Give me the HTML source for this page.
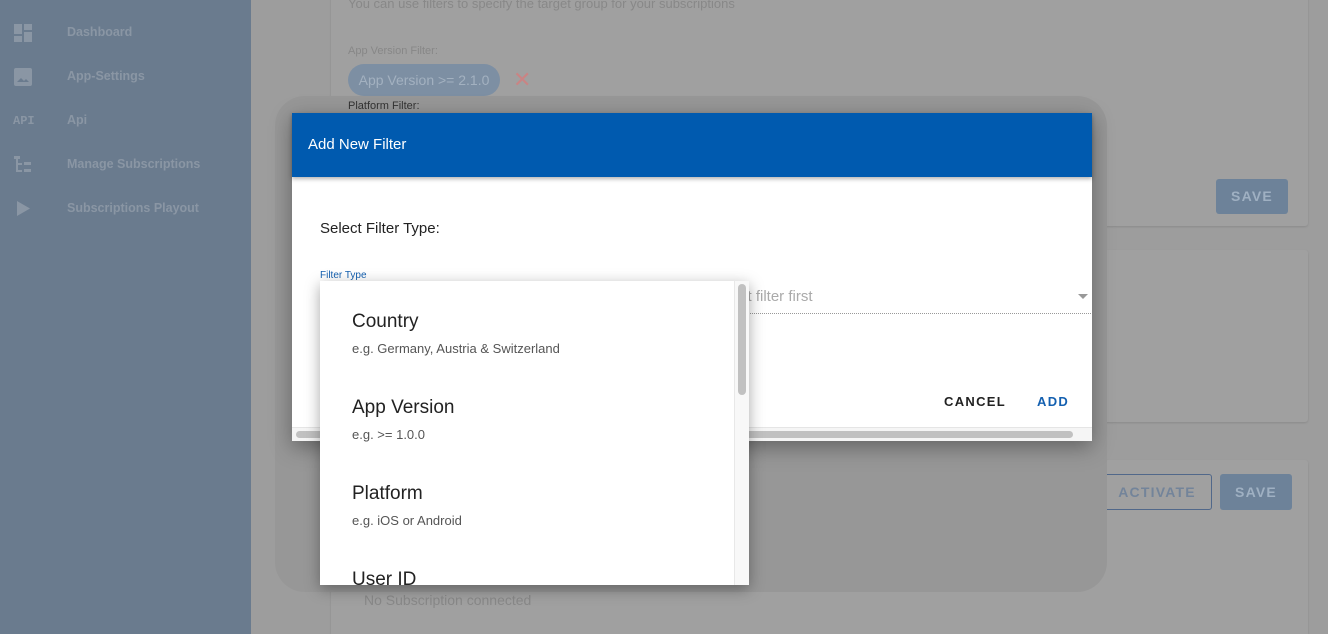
<!DOCTYPE html>
<html style="overflow:hidden;height:634px"><head><style>
*{box-sizing:border-box;margin:0;padding:0}
body{width:1328px;height:634px;overflow:hidden;background:#9d9d9d;font-family:"Liberation Sans",sans-serif;position:relative}
.a{position:absolute}
.side{left:0;top:0;width:251px;height:634px;background:#6a7b8e}
.nav{left:67px;font-size:12.5px;font-weight:bold;color:#8a96a4}
.card{background:#a0a0a0;left:331px;width:977px;border-radius:3px;box-shadow:0 1px 2px rgba(0,0,0,.12)}
.btn{background:#6d8299;color:#9fb0c2;font-size:14px;font-weight:bold;letter-spacing:1.2px;text-align:center;border-radius:3px}
</style></head><body>
<div class="a side"></div>
<svg class="a" style="left:14px;top:24px" width="19" height="19"><g fill="#8a96a4"><rect x="0" y="0" width="8" height="10"/><rect x="10" y="0" width="8" height="6"/><rect x="0" y="12" width="8" height="6"/><rect x="10" y="8" width="8" height="10"/></g></svg>
<svg class="a" style="left:14px;top:68px" width="19" height="19"><rect width="18" height="18" rx="2" fill="#8a96a4"/><path d="M3 14l4-4 3 3 2-2 3 3z" fill="#6a7b8e"/></svg>
<div class="a" style="left:13px;top:114px;font-family:'Liberation Mono';font-weight:bold;font-size:12px;color:#8a96a4">API</div>
<svg class="a" style="left:14px;top:156px" width="19" height="19"><g fill="#8a96a4"><rect x="0" y="0" width="6" height="3"/><rect x="2" y="3" width="2" height="13"/><rect x="2" y="7" width="6" height="2"/><rect x="2" y="14" width="6" height="2"/><rect x="10" y="6" width="7" height="3"/><rect x="10" y="13" width="7" height="3"/></g></svg>
<svg class="a" style="left:17px;top:201px" width="14" height="16"><path d="M0 0L13 7.5 0 15z" fill="#8a96a4"/></svg>
<div class="a nav" style="top:25px">Dashboard</div>
<div class="a nav" style="top:69px">App-Settings</div>
<div class="a nav" style="top:113px">Api</div>
<div class="a nav" style="top:157px">Manage Subscriptions</div>
<div class="a nav" style="top:201px">Subscriptions Playout</div>

<div class="a card" style="top:-10px;height:236px"></div>
<div class="a card" style="top:250px;height:172px"></div>
<div class="a card" style="top:460px;height:174px;border-radius:3px 3px 0 0"></div>
<div class="a" style="left:348px;top:-4px;font-size:13px;color:#888">You can use filters to specify the target group for your subscriptions</div>
<div class="a" style="left:348px;top:45px;font-size:11px;color:#878787">App Version Filter:</div>
<div class="a" style="left:348px;top:64px;width:152px;height:32px;border-radius:16px;background:#7d8fa3;color:#a3b1c0;font-size:14px;line-height:32px;text-align:center">App Version &gt;= 2.1.0</div>
<div class="a" style="left:513px;top:67px;font-size:22px;color:#c98484">✕</div>
<div class="a btn" style="left:1216px;top:179px;width:72px;height:35px;line-height:35px">SAVE</div>
<div class="a" style="left:1102px;top:474px;width:110px;height:36px;border:1px solid #51688a;border-radius:3px;color:#73849a;font-size:14px;font-weight:bold;letter-spacing:1.2px;line-height:34px;text-align:center">ACTIVATE</div>
<div class="a btn" style="left:1220px;top:474px;width:72px;height:36px;line-height:36px">SAVE</div>
<div class="a" style="left:364px;top:592px;font-size:14px;color:#888">No Subscription connected</div>

<div class="a" style="left:275px;top:96px;width:832px;height:496px;border-radius:30px;background:#979797"></div>
<div class="a" style="left:348px;top:100px;font-size:11px;color:#333">Platform Filter:</div>

<div class="a" style="left:292px;top:113px;width:800px;height:328px;background:#fff;box-shadow:0 6px 20px rgba(0,0,0,.35)"></div>
<div class="a" style="left:292px;top:113px;width:800px;height:64px;background:#005aaf;box-shadow:0 2px 4px rgba(0,0,0,.3);color:#fff;font-size:15px;padding:23px 16px">Add New Filter</div>
<div class="a" style="left:320px;top:220px;font-size:15px;color:#222">Select Filter Type:</div>
<div class="a" style="left:320px;top:270px;font-size:10px;color:#1460b0">Filter Type</div>
<div class="a" style="left:740px;top:288px;font-size:15px;color:#aaa">ct filter first</div>
<div class="a" style="left:1078px;top:294px;width:0;height:0;border:5px solid transparent;border-top-color:#999"></div>
<div class="a" style="left:740px;top:313px;width:351px;border-top:1px dotted #999"></div>
<div class="a" style="left:944px;top:394px;font-size:13px;font-weight:bold;letter-spacing:1.3px;color:#222">CANCEL</div>
<div class="a" style="left:1037px;top:394px;font-size:13px;font-weight:bold;letter-spacing:1.3px;color:#1460b0">ADD</div>
<div class="a" style="left:292px;top:427px;width:800px;height:14px;background:#f5f5f5;border-top:1px solid #e5e5e5"></div>
<div class="a" style="left:296px;top:431px;width:777px;height:7px;border-radius:4px;background:#c1c1c1"></div>

<div class="a" style="left:320px;top:281px;width:429px;height:304px;background:#fff;box-shadow:0 4px 14px rgba(0,0,0,.35);overflow:hidden">
<div class="a" style="right:0;top:0;width:15px;height:304px;background:#f8f8f8;border-left:1px solid #e8e8e8"></div>
<div class="a" style="right:3px;top:3px;width:8px;height:111px;border-radius:4px;background:#c1c1c1"></div>
<div class="a" style="left:32px;top:30px;font-size:19px;color:#222">Country</div>
<div class="a" style="left:32px;top:60px;font-size:13px;color:#555">e.g. Germany, Austria &amp; Switzerland</div>
<div class="a" style="left:32px;top:116px;font-size:19px;color:#222">App Version</div>
<div class="a" style="left:32px;top:146px;font-size:13px;color:#555">e.g. &gt;= 1.0.0</div>
<div class="a" style="left:32px;top:202px;font-size:19px;color:#222">Platform</div>
<div class="a" style="left:32px;top:232px;font-size:13px;color:#555">e.g. iOS or Android</div>
<div class="a" style="left:32px;top:288px;font-size:19px;color:#222">User ID</div>
</div>
</body></html>
